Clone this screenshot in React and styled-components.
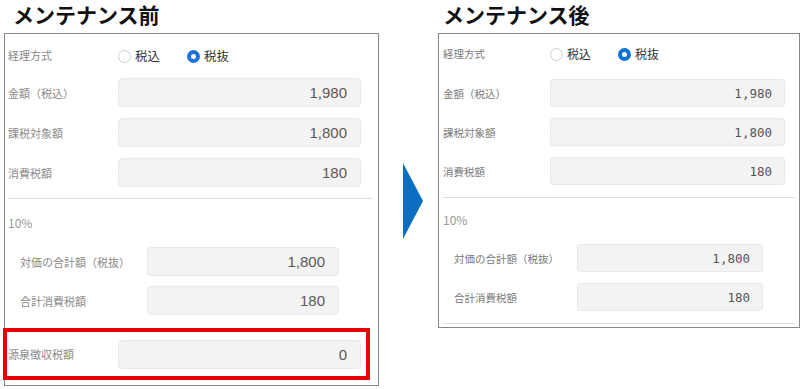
import React from "react";
import styled, { createGlobalStyle } from "styled-components";

const Global = createGlobalStyle`
  html, body { margin: 0; padding: 0; background: #fff; }
  body { font-family: "Noto Sans CJK JP", "Noto Sans", sans-serif; }
`;

const V = {
  before: {
    colW: 375, titleIndent: 9, padL: 3, padR: 6, padB: 5,
    labelW: 110, inputW: 243, boxH: 29, radioH: 42, firstMt: 2, rowMt: 11,
    divMt: 11, secMt: 14, subMt: 14, subGap: 10, subPad: 12, subLabelW: 127, subInputW: 192,
    labelSize: 11, labelColor: "#8a8a8a", valueFont: '"Liberation Sans", "Noto Sans", sans-serif',
    valueSize: 15, valueColor: "#5a5a5a", valuePad: 13, radius: 4, radioColor: "#1e74d6", radioText: 12.5,
  },
  after: {
    colW: 362, titleIndent: 5, padL: 4, padR: 4, padB: 3,
    labelW: 107, inputW: 235, boxH: 28, radioH: 38, firstMt: 7, rowMt: 11,
    divMt: 12, secMt: 12, subMt: 14, subGap: 11, subPad: 11, subLabelW: 123, subInputW: 186,
    labelSize: 10.5, labelColor: "#7a7a7a", valueFont: '"DejaVu Sans Mono", "Liberation Mono", monospace',
    valueSize: 12.5, valueColor: "#555", valuePad: 12, radius: 3, radioColor: "#0a72cf", radioText: 12,
  },
};

const Page = styled.div`
  display: flex;
  align-items: flex-start;
  padding-left: 4px;
`;

const Column = styled.section`
  width: ${(p) => p.$v.colW}px;
  display: flex;
  flex-direction: column;
`;

const Title = styled.h2`
  margin: 0;
  height: 33px;
  line-height: 28px;
  font-size: 21px;
  font-weight: 700;
  color: #111;
  padding-left: ${(p) => p.$v.titleIndent}px;
  font-family: "Noto Sans CJK JP", sans-serif;
`;

const Panel = styled.div`
  border: 1px solid #878787;
  padding: 0 ${(p) => p.$v.padR}px ${(p) => p.$v.padB}px ${(p) => p.$v.padL}px;
  display: flex;
  flex-direction: column;
`;

const ArrowBox = styled.div`
  width: 20px;
  margin: 163px 15px 0 24px;
  display: flex;
`;

const Label = styled.span`
  font-size: ${(p) => p.$v.labelSize}px;
  color: ${(p) => p.$v.labelColor};
  white-space: nowrap;
`;

const RadioRow = styled.div`
  display: grid;
  grid-template-columns: ${(p) => p.$v.labelW}px auto;
  align-items: center;
  height: ${(p) => p.$v.radioH}px;
`;

const RadioGroup = styled.div`
  display: flex;
  align-items: center;
  gap: 27px;
`;

const RadioOption = styled.label`
  display: flex;
  align-items: center;
  gap: 4px;
  font-size: ${(p) => p.$v.radioText}px;
  color: #333;
`;

const Circle = styled.span`
  width: 13px;
  height: 13px;
  box-sizing: border-box;
  border-radius: 50%;
  background: #fff;
  border: ${(p) => (p.$on ? `4px solid ${p.$v.radioColor}` : "1px solid #cfcfcf")};
  margin-top: 3px;
`;

const FieldRow = styled.div`
  display: grid;
  grid-template-columns: ${(p) => p.$lw}px ${(p) => p.$iw}px;
  align-items: center;
  margin-top: ${(p) => p.$mt}px;
  padding-left: ${(p) => p.$pl || 0}px;
`;

const ValueBox = styled.div`
  height: ${(p) => p.$v.boxH}px;
  box-sizing: border-box;
  background: #f3f3f3;
  border: 1px solid #e9e9e9;
  border-radius: ${(p) => p.$v.radius}px;
  display: flex;
  align-items: center;
  justify-content: flex-end;
  padding-right: ${(p) => p.$v.valuePad}px;
  font-family: ${(p) => p.$v.valueFont};
  font-size: ${(p) => p.$v.valueSize}px;
  color: ${(p) => p.$v.valueColor};
`;

const Divider = styled.div`
  height: 1px;
  background: #dcdcdc;
  margin-top: ${(p) => p.$mt}px;
`;

const SectionLabel = styled.div`
  height: 20px;
  line-height: 20px;
  margin-top: ${(p) => p.$v.secMt}px;
  font-size: 12px;
  color: #999;
`;

const Highlight = styled.div`
  margin-top: 13px;
  margin-left: -5px;
  width: 367px;
  height: 52px;
  box-sizing: border-box;
  border: 4px solid #e8000b;
  padding-left: 1px;
  display: grid;
  grid-template-columns: 110px 243px;
  align-items: center;
`;

function Field({ v, label, value, mt }) {
  return (
    <FieldRow $lw={v.labelW} $iw={v.inputW} $mt={mt}>
      <Label $v={v}>{label}</Label>
      <ValueBox $v={v}>{value}</ValueBox>
    </FieldRow>
  );
}

function SubField({ v, label, value, mt }) {
  return (
    <FieldRow $lw={v.subLabelW} $iw={v.subInputW} $mt={mt} $pl={v.subPad}>
      <Label $v={v}>{label}</Label>
      <ValueBox $v={v}>{value}</ValueBox>
    </FieldRow>
  );
}

function Form({ kind }) {
  const v = V[kind];
  return (
    <Column $v={v}>
      <Title $v={v}>{kind === "before" ? "メンテナンス前" : "メンテナンス後"}</Title>
      <Panel $v={v}>
        <RadioRow $v={v}>
          <Label $v={v}>経理方式</Label>
          <RadioGroup>
            <RadioOption $v={v}>
              <Circle $v={v} />
              税込
            </RadioOption>
            <RadioOption $v={v}>
              <Circle $v={v} $on />
              税抜
            </RadioOption>
          </RadioGroup>
        </RadioRow>
        <Field v={v} label="金額（税込）" value="1,980" mt={v.firstMt} />
        <Field v={v} label="課税対象額" value="1,800" mt={v.rowMt} />
        <Field v={v} label="消費税額" value="180" mt={v.rowMt} />
        <Divider $mt={v.divMt} />
        <SectionLabel $v={v}>10%</SectionLabel>
        <SubField v={v} label="対価の合計額（税抜）" value="1,800" mt={v.subMt} />
        <SubField v={v} label="合計消費税額" value="180" mt={v.subGap} />
        {kind === "before" ? (
          <Highlight>
            <Label $v={v}>源泉徴収税額</Label>
            <ValueBox $v={v}>0</ValueBox>
          </Highlight>
        ) : (
          <Divider $mt={12} />
        )}
      </Panel>
    </Column>
  );
}

export default function App() {
  return (
    <>
      <Global />
      <Page>
        <Form kind="before" />
        <ArrowBox>
          <svg width="20" height="76" viewBox="0 0 20 76">
            <polygon points="0,0 20,38 0,76" fill="#0b6fc1" />
          </svg>
        </ArrowBox>
        <Form kind="after" />
      </Page>
    </>
  );
}
